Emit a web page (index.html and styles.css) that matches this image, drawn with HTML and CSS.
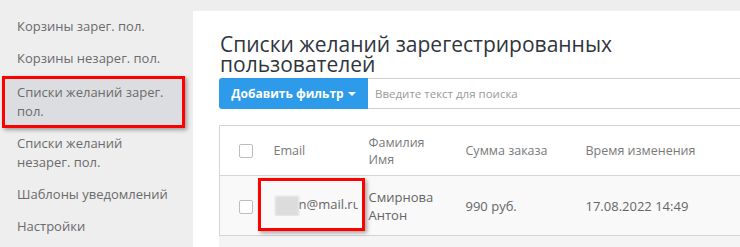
FILE: index.html
```html
<!DOCTYPE html>
<html lang="ru">

<head>
    <meta charset="UTF-8">
    <meta name="viewport" content="width=device-width, initial-scale=1.0">
    <title>Списки желаний</title>
    <link rel="stylesheet" href="styles.css">
</head>

<body>
    <div class="layout">
        <nav class="sidebar">
            <a href="#" class="nav-item">Корзины зарег. пол.</a>
            <a href="#" class="nav-item">Корзины незарег. пол.</a>
            <a href="#" class="nav-item active">Списки желаний зарег. пол.</a>
            <a href="#" class="nav-item">Списки желаний незарег. пол.</a>
            <a href="#" class="nav-item">Шаблоны уведомлений</a>
            <a href="#" class="nav-item">Настройки</a>
        </nav>

        <main class="content">
            <h1 class="page-title">Списки желаний зарегестрированных пользователей</h1>

            <div class="toolbar">
                <button class="btn-filter">Добавить фильтр <span class="caret"></span></button>
                <input class="search" type="text" placeholder="Введите текст для поиска">
            </div>

            <table class="grid">
                <colgroup>
                    <col style="width: 49px">
                    <col style="width: 95px">
                    <col style="width: 97px">
                    <col style="width: 120px">
                    <col>
                </colgroup>
                <thead>
                    <tr>
                        <th class="col-check"><span class="checkbox"></span></th>
                        <th>Email</th>
                        <th>Фамилия<br>Имя</th>
                        <th>Сумма заказа</th>
                        <th>Время изменения</th>
                    </tr>
                </thead>
                <tbody>
                    <tr>
                        <td class="col-check"><span class="checkbox"></span></td>
                        <td class="col-email"><span class="email"><span class="blur"></span>n@mail.ru</span></td>
                        <td>Смирнова<br>Антон</td>
                        <td>990 руб.</td>
                        <td>17.08.2022 14:49</td>
                    </tr>
                </tbody>
            </table>
            <div class="grid-footer"></div>
        </main>
    </div>
</body>

</html>
```

FILE: styles.css
```css
* {
    margin: 0;
    padding: 0;
    box-sizing: border-box;
}

html,
body {
    height: 100%;
    overflow: hidden;
}

body {
    font-family: "Open Sans", "Noto Sans", sans-serif;
    background: #eeeeee;
    color: #666;
}

.layout {
    display: flex;
    height: 100%;
}

.sidebar {
    width: 193px;
    flex-shrink: 0;
    padding-top: 10px;
    display: flex;
    flex-direction: column;
}

.nav-item {
    display: block;
    width: 183px;
    margin-left: 2px;
    padding: 6.5px 12px 6.5px 15px;
    font-size: 13px;
    line-height: 19px;
    color: #6b6b6b;
    text-decoration: none;
}

.nav-item.active {
    background: #dcdde0;
    border: 3px solid #ff0000;
    padding: 4px 12px 3.5px 12px;
    margin-top: 2px;
    box-shadow: 2px 2px 4px rgba(0, 0, 0, 0.35);
}

.content {
    flex: 1;
    margin-top: 11px;
    background: #fff;
    padding: 23px 0 0 26px;
    overflow: hidden;
}

.page-title {
    font-size: 21px;
    font-weight: normal;
    line-height: 20px;
    color: #2f353d;
    padding-left: 1px;
    margin-bottom: 4px;
}

.toolbar {
    display: flex;
    height: 31px;
    width: 600px;
    margin-bottom: 16px;
}

.btn-filter {
    width: 149px;
    flex-shrink: 0;
    border: none;
    border-radius: 3px 0 0 3px;
    background: #2d9bea;
    color: #fff;
    font-family: "Open Sans", "Noto Sans", sans-serif;
    font-size: 12px;
    font-weight: bold;
    display: flex;
    align-items: center;
    justify-content: center;
    gap: 4px;
}

.caret {
    width: 0;
    height: 0;
    border-left: 4px solid transparent;
    border-right: 4px solid transparent;
    border-top: 4px solid #fff;
}

.search {
    flex: 1;
    border: 1px solid #cfcfcf;
    border-left: none;
    padding-left: 7px;
    font-family: "Open Sans", "Noto Sans", sans-serif;
    font-size: 11.5px;
    color: #555;
    outline: none;
}

.search::placeholder {
    color: #9a9a9a;
}

.grid {
    width: 600px;
    table-layout: fixed;
    border-collapse: collapse;
    border: 1px solid #d4d4d4;
    font-size: 12.5px;
}

.grid th {
    height: 50px;
    font-weight: normal;
    text-align: left;
    color: #7a7a7a;
    line-height: 17px;
    padding: 0 5px;
    border-bottom: 1px solid #d4d4d4;
}

.grid td {
    height: 60px;
    background: #f9f9f9;
    color: #666;
    font-size: 13px;
    line-height: 18px;
    padding: 0 5px;
}

.grid .col-check {
    padding-left: 19px;
}

.checkbox {
    display: block;
    width: 14px;
    height: 14px;
    border: 1px solid #bdbdbd;
    border-radius: 2px;
    background: #fff;
}

.grid td .checkbox {
    margin-top: 2px;
}

/* email cell, highlighted with a red frame */
.grid .col-email {
    position: relative;
    padding-right: 0;
    white-space: nowrap;
}

.col-email::after {
    content: "";
    box-sizing: border-box;
    position: absolute;
    left: -11px;
    top: 2px;
    width: 107px;
    height: 53px;
    border: 3px solid #ff0000;
    box-shadow: 2px 2px 4px rgba(0, 0, 0, 0.35);
}

.email {
    display: inline-block;
    width: 84px;
    overflow: hidden;
    vertical-align: middle;
}

.blur {
    display: inline-block;
    width: 24px;
    height: 20px;
    margin-left: 1px;
    vertical-align: middle;
    background: #dcdcdc;
    filter: blur(1px);
}

.grid-footer {
    width: 600px;
    height: 12px;
    background: #f4f4f4;
}
```
